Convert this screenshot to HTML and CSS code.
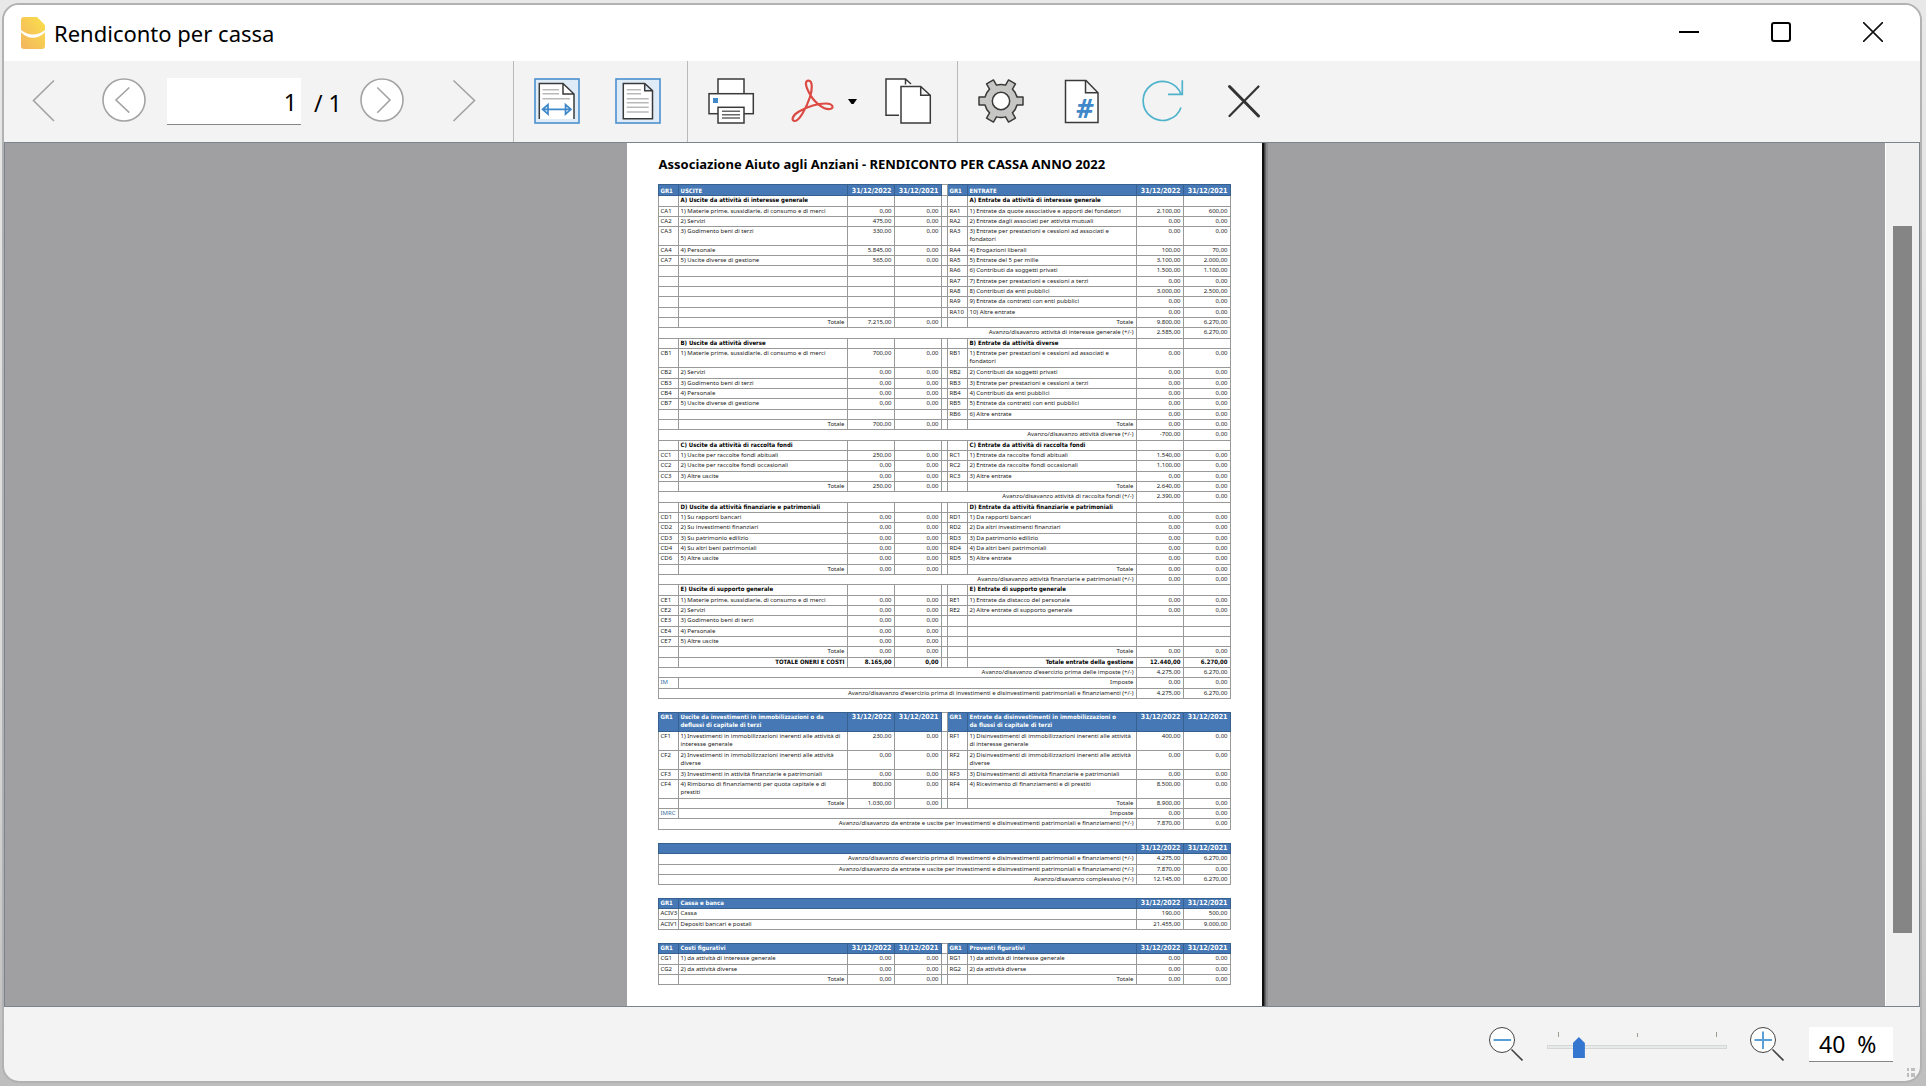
FILE: index.html
```html
<!DOCTYPE html>
<html lang="it">
<head>
<meta charset="utf-8">
<title>Rendiconto per cassa</title>
<link rel="stylesheet" href="styles.css">
</head>
<body>
<div class="window">
  <header class="titlebar">
    <svg class="app-icon" width="24" height="32" viewBox="0 0 24 32" aria-hidden="true">
      <defs><linearGradient id="gold" x1="1" y1="0" x2="0" y2="1"><stop offset="0" stop-color="#fae04b"/><stop offset="1" stop-color="#f3b45f"/></linearGradient></defs>
      <path d="M3 0H16L24 8V13Q12 22 0 13V3Q0 0 3 0ZM0 15.500Q12 26 24 15.500V29Q24 32 21 32H3Q0 32 0 29Z" fill="url(#gold)"/>
    </svg>
    <h1 class="title">Rendiconto per cassa</h1>
    <button class="win-btn" aria-label="Riduci a icona"><svg width="20" height="20"><path d="M0 10H20" stroke="#000" stroke-width="2"/></svg></button>
    <button class="win-btn" aria-label="Ingrandisci"><svg width="20" height="20"><rect x="1" y="1" width="18" height="18" rx="2" fill="none" stroke="#000" stroke-width="2"/></svg></button>
    <button class="win-btn" aria-label="Chiudi finestra"><svg width="20" height="20"><path d="M0 0L20 20M20 0L0 20" stroke="#111" stroke-width="1.600"/></svg></button>
  </header>

  <div class="toolbar">
    <div class="group nav">
      <button class="tool" aria-label="Prima pagina"><svg viewBox="0 0 47 47"><path d="M33 2.500L12.500 22.500L33 43" class="grey"/></svg></button>
      <button class="tool" aria-label="Pagina precedente"><svg viewBox="0 0 47 47"><circle cx="22" cy="22" r="21" class="grey white"/><path d="M27.300 9.500L14 22L27.300 34.700" class="grey"/></svg></button>
      <input class="page-no" type="text" value="1" aria-label="Pagina">
      <span class="page-count">/ 1</span>
      <button class="tool" aria-label="Pagina successiva"><svg viewBox="0 0 47 47"><circle cx="23" cy="22" r="21" class="grey white"/><path d="M18.300 9.500L31 22L18.300 34.700" class="grey"/></svg></button>
      <button class="tool" aria-label="Ultima pagina"><svg viewBox="0 0 47 47"><path d="M13.500 2.500L34.500 22.500L13.500 43" class="grey"/></svg></button>
    </div>
    <div class="group">
      <button class="tool" aria-label="Adatta alla larghezza"><svg viewBox="0 0 47 47">
        <rect x="1" y="1" width="44" height="44" class="frame"/>
        <path d="M5.300 41V5.500H29L40 16V41Z" fill="#fff"/><path d="M5.300 41V5.500H29L40 16V41M29 5.500V16H40" class="ink"/>
        <path d="M8.500 11.700H25M8.500 15.700H25M8.500 20.700H36" class="lines"/>
        <path d="M8.500 31.300H37M8.500 31.300L14 26.500V36.200ZM37 31.300L31.500 26.500V36.200Z" class="blue"/></svg></button>
      <button class="tool" aria-label="Pagina intera"><svg viewBox="0 0 47 47">
        <rect x="1" y="1" width="44" height="44" class="frame"/>
        <path d="M8.300 5.500H29.700L37.500 12.700V40.700H8.300ZM29.700 5.500V12.700H37.500" class="ink white"/>
        <path d="M11.700 11.700H26M11.700 15.700H26M11.700 20.700H33.700M11.700 24.700H33.700M11.700 29.300H33.700M11.700 34H33.700" class="lines"/></svg></button>
    </div>
    <div class="group">
      <button class="tool" aria-label="Stampa"><svg viewBox="0 0 47 47">
        <rect x="10" y="1" width="26" height="15" class="ink white"/><rect x="1" y="15.700" width="44.300" height="20" class="ink white"/>
        <rect x="5" y="20" width="5" height="5" fill="#3f88c9"/><rect x="10" y="29.300" width="26" height="15.700" class="ink white"/>
        <path d="M14 33.300H32M14 36.700H32M14 40H32" stroke="#666" stroke-width="1.400"/></svg></button>
      <button class="tool" aria-label="Esporta PDF"><svg viewBox="0 0 47 47"><path d="M19.500 2.700C24 2.700 23.200 12 21 19C17 31 10 43 6 43C1.500 43 3.500 37 10 33.500C18 29 29 25.500 37 25.500C44 25.500 45.500 30.500 41 31C34 32 24 23 20 14.500C16 7 16 2.700 19.500 2.700Z" fill="none" stroke="#dc4a43" stroke-width="2.200"/></svg></button>
      <button class="drop" aria-label="Opzioni PDF"><svg width="9" height="5"><path d="M0 0H9L5.500 5H3.500Z"/></svg></button>
      <button class="tool" aria-label="Copia"><svg viewBox="0 0 47 47">
        <path d="M1 37.300V1H20L26 6V8H16V37.300Z" fill="#fff"/><path d="M14 37.300H1V1H20.500L26 6M20.500 1V6.500" class="ink"/>
        <path d="M16 8.500H35.700L45.300 17.300V45H16ZM35.700 8.500V17.300H45.300" class="ink white"/></svg></button>
    </div>
    <div class="group">
      <button class="tool" aria-label="Impostazioni"><svg viewBox="0 0 47 47"><g transform="translate(23 23)">
        <path d="M16 -4L22 -4V4L16 4A16.500 16.500 0 0 1 11.460 11.860L14.460 17.050L7.540 21.050L4.540 15.860A16.500 16.500 0 0 1 -4.540 15.860L-7.540 21.050L-14.460 17.050L-11.460 11.860A16.500 16.500 0 0 1 -16 4L-22 4V-4L-16 -4A16.500 16.500 0 0 1 -11.460 -11.860L-14.460 -17.050L-7.540 -21.050L-4.540 -15.860A16.500 16.500 0 0 1 4.540 -15.860L7.540 -21.050L14.460 -17.050L11.460 -11.860A16.500 16.500 0 0 1 16 -4Z" class="ink gear"/>
        <circle r="8.700" class="ink white"/></g></svg></button>
      <button class="tool" aria-label="Numero di pagina"><svg viewBox="0 0 47 47"><path d="M6.500 2.500H27L39 14.700V44.500H6.500ZM26.500 2.500V14.700H39" class="ink white"/><text x="17" y="40" class="hash">#</text></svg></button>
      <button class="tool" aria-label="Aggiorna"><svg viewBox="0 0 47 47"><path d="M41 29.500A19.500 19.500 0 1 1 41 16.300M42.300 2.300V16.300H28" fill="none" stroke="#4fb3cb" stroke-width="1.700"/></svg></button>
      <button class="tool" aria-label="Chiudi"><svg viewBox="0 0 47 47"><path d="M8.500 8.500L37.500 38" stroke="#333" stroke-width="3" stroke-linecap="round"/><path d="M37.500 8.500L8.500 38" stroke="#333" stroke-width="2.200" stroke-linecap="round"/></svg></button>
    </div>
  </div>

  <main class="viewport">
    <div class="canvas">
      <article class="paper">
        <h2 class="doc-title">Associazione Aiuto agli Anziani - RENDICONTO PER CASSA ANNO 2022</h2>

        <table>
          <colgroup><col class="c-code"><col class="c-out"><col class="c-num"><col class="c-num"><col class="c-gap"><col class="c-code"><col class="c-in"><col class="c-num"><col class="c-num"></colgroup>
          <thead><tr class="main-head"><th>GR1<th>USCITE<th class="date">31/12/2022<th class="date">31/12/2021<td><th>GR1<th>ENTRATE<th class="date">31/12/2022<th class="date">31/12/2021</thead>
          <tbody>
          <tr class="sec"><td><td>A) Uscite da attività di interesse generale<td><td><td><td><td>A) Entrate da attività di interesse generale<td><td>
          <tr><td>CA1<td>1) Materie prime, sussidiarie, di consumo e di merci<td>0,00<td>0,00<td><td>RA1<td>1) Entrate da quote associative e apporti dei fondatori<td>2.100,00<td>600,00
          <tr><td>CA2<td>2) Servizi<td>475,00<td>0,00<td><td>RA2<td>2) Entrate dagli associati per attività mutuali<td>0,00<td>0,00
          <tr class="tall"><td>CA3<td>3) Godimento beni di terzi<td>330,00<td>0,00<td><td>RA3<td>3) Entrate per prestazioni e cessioni ad associati e<br>fondatori<td>0,00<td>0,00
          <tr><td>CA4<td>4) Personale<td>5.845,00<td>0,00<td><td>RA4<td>4) Erogazioni liberali<td>100,00<td>70,00
          <tr><td>CA7<td>5) Uscite diverse di gestione<td>565,00<td>0,00<td><td>RA5<td>5) Entrate del 5 per mille<td>3.100,00<td>2.000,00
          <tr><td><td><td><td><td><td>RA6<td>6) Contributi da soggetti privati<td>1.500,00<td>1.100,00
          <tr><td><td><td><td><td><td>RA7<td>7) Entrate per prestazioni e cessioni a terzi<td>0,00<td>0,00
          <tr><td><td><td><td><td><td>RA8<td>8) Contributi da enti pubblici<td>3.000,00<td>2.500,00
          <tr><td><td><td><td><td><td>RA9<td>9) Entrate da contratti con enti pubblici<td>0,00<td>0,00
          <tr><td><td><td><td><td><td>RA10<td>10) Altre entrate<td>0,00<td>0,00
          <tr class="tot"><td><td>Totale<td>7.215,00<td>0,00<td><td><td>Totale<td>9.800,00<td>6.270,00
          <tr class="tot"><td colspan="7">Avanzo/disavanzo attività di interesse generale (+/-)<td>2.585,00<td>6.270,00
          <tr class="sec"><td><td>B) Uscite da attività diverse<td><td><td><td><td>B) Entrate da attività diverse<td><td>
          <tr class="tall"><td>CB1<td>1) Materie prime, sussidiarie, di consumo e di merci<td>700,00<td>0,00<td><td>RB1<td>1) Entrate per prestazioni e cessioni ad associati e<br>fondatori<td>0,00<td>0,00
          <tr><td>CB2<td>2) Servizi<td>0,00<td>0,00<td><td>RB2<td>2) Contributi da soggetti privati<td>0,00<td>0,00
          <tr><td>CB3<td>3) Godimento beni di terzi<td>0,00<td>0,00<td><td>RB3<td>3) Entrate per prestazioni e cessioni a terzi<td>0,00<td>0,00
          <tr><td>CB4<td>4) Personale<td>0,00<td>0,00<td><td>RB4<td>4) Contributi da enti pubblici<td>0,00<td>0,00
          <tr><td>CB7<td>5) Uscite diverse di gestione<td>0,00<td>0,00<td><td>RB5<td>5) Entrate da contratti con enti pubblici<td>0,00<td>0,00
          <tr><td><td><td><td><td><td>RB6<td>6) Altre entrate<td>0,00<td>0,00
          <tr class="tot"><td><td>Totale<td>700,00<td>0,00<td><td><td>Totale<td>0,00<td>0,00
          <tr class="tot"><td colspan="7">Avanzo/disavanzo attività diverse (+/-)<td>-700,00<td>0,00
          <tr class="sec"><td><td>C) Uscite da attività di raccolta fondi<td><td><td><td><td>C) Entrate da attività di raccolta fondi<td><td>
          <tr><td>CC1<td>1) Uscite per raccolte fondi abituali<td>250,00<td>0,00<td><td>RC1<td>1) Entrate da raccolte fondi abituali<td>1.540,00<td>0,00
          <tr><td>CC2<td>2) Uscite per raccolte fondi occasionali<td>0,00<td>0,00<td><td>RC2<td>2) Entrate da raccolte fondi occasionali<td>1.100,00<td>0,00
          <tr><td>CC3<td>3) Altre uscite<td>0,00<td>0,00<td><td>RC3<td>3) Altre entrate<td>0,00<td>0,00
          <tr class="tot"><td><td>Totale<td>250,00<td>0,00<td><td><td>Totale<td>2.640,00<td>0,00
          <tr class="tot"><td colspan="7">Avanzo/disavanzo attività di raccolta fondi (+/-)<td>2.390,00<td>0,00
          <tr class="sec"><td><td>D) Uscite da attività finanziarie e patrimoniali<td><td><td><td><td>D) Entrate da attività finanziarie e patrimoniali<td><td>
          <tr><td>CD1<td>1) Su rapporti bancari<td>0,00<td>0,00<td><td>RD1<td>1) Da rapporti bancari<td>0,00<td>0,00
          <tr><td>CD2<td>2) Su investimenti finanziari<td>0,00<td>0,00<td><td>RD2<td>2) Da altri investimenti finanziari<td>0,00<td>0,00
          <tr><td>CD3<td>3) Su patrimonio edilizio<td>0,00<td>0,00<td><td>RD3<td>3) Da patrimonio edilizio<td>0,00<td>0,00
          <tr><td>CD4<td>4) Su altri beni patrimoniali<td>0,00<td>0,00<td><td>RD4<td>4) Da altri beni patrimoniali<td>0,00<td>0,00
          <tr><td>CD6<td>5) Altre uscite<td>0,00<td>0,00<td><td>RD5<td>5) Altre entrate<td>0,00<td>0,00
          <tr class="tot"><td><td>Totale<td>0,00<td>0,00<td><td><td>Totale<td>0,00<td>0,00
          <tr class="tot"><td colspan="7">Avanzo/disavanzo attività finanziarie e patrimoniali (+/-)<td>0,00<td>0,00
          <tr class="sec"><td><td>E) Uscite di supporto generale<td><td><td><td><td>E) Entrate di supporto generale<td><td>
          <tr><td>CE1<td>1) Materie prime, sussidiarie, di consumo e di merci<td>0,00<td>0,00<td><td>RE1<td>1) Entrate da distacco del personale<td>0,00<td>0,00
          <tr><td>CE2<td>2) Servizi<td>0,00<td>0,00<td><td>RE2<td>2) Altre entrate di supporto generale<td>0,00<td>0,00
          <tr><td>CE3<td>3) Godimento beni di terzi<td>0,00<td>0,00<td><td><td><td><td>
          <tr><td>CE4<td>4) Personale<td>0,00<td>0,00<td><td><td><td><td>
          <tr><td>CE7<td>5) Altre uscite<td>0,00<td>0,00<td><td><td><td><td>
          <tr class="tot"><td><td>Totale<td>0,00<td>0,00<td><td><td>Totale<td>0,00<td>0,00
          <tr class="tot sec"><td><td>TOTALE ONERI E COSTI<td>8.165,00<td>0,00<td><td><td>Totale entrate della gestione<td>12.440,00<td>6.270,00
          <tr class="tot"><td colspan="7">Avanzo/disavanzo d'esercizio prima delle imposte (+/-)<td>4.275,00<td>6.270,00
          <tr class="tot"><td class="tax">IM<td colspan="6">Imposte<td>0,00<td>0,00
          <tr class="tot"><td colspan="7">Avanzo/disavanzo d'esercizio prima di investimenti e disinvestimenti patrimoniali e finanziamenti (+/-)<td>4.275,00<td>6.270,00
          </tbody>
        </table>

        <table>
          <colgroup><col class="c-code"><col class="c-out"><col class="c-num"><col class="c-num"><col class="c-gap"><col class="c-code"><col class="c-in"><col class="c-num"><col class="c-num"></colgroup>
          <thead><tr class="tall"><th>GR1<th>Uscite da investimenti in immobilizzazioni o da<br>deflussi di capitale di terzi<th class="date">31/12/2022<th class="date">31/12/2021<td><th>GR1<th>Entrate da disinvestimenti in immobilizzazioni o<br>da flussi di capitale di terzi<th class="date">31/12/2022<th class="date">31/12/2021</thead>
          <tbody>
          <tr class="tall"><td>CF1<td>1) Investimenti in immobilizzazioni inerenti alle attività di<br>interesse generale<td>230,00<td>0,00<td><td>RF1<td>1) Disinvestimenti di immobilizzazioni inerenti alle attività<br>di interesse generale<td>400,00<td>0,00
          <tr class="tall"><td>CF2<td>2) Investimenti in immobilizzazioni inerenti alle attività<br>diverse<td>0,00<td>0,00<td><td>RF2<td>2) Disinvestimenti di immobilizzazioni inerenti alle attività<br>diverse<td>0,00<td>0,00
          <tr><td>CF3<td>3) Investimenti in attività finanziarie e patrimoniali<td>0,00<td>0,00<td><td>RF3<td>3) Disinvestimenti di attività finanziarie e patrimoniali<td>0,00<td>0,00
          <tr class="tall"><td>CF4<td>4) Rimborso di finanziamenti per quota capitale e di<br>prestiti<td>800,00<td>0,00<td><td>RF4<td>4) Ricevimento di finanziamenti e di prestiti<td>8.500,00<td>0,00
          <tr class="tot"><td><td>Totale<td>1.030,00<td>0,00<td><td><td>Totale<td>8.900,00<td>0,00
          <tr class="tot"><td class="tax">IMRC<td colspan="6">Imposte<td>0,00<td>0,00
          <tr class="tot"><td colspan="7">Avanzo/disavanzo da entrate e uscite per investimenti e disinvestimenti patrimoniali e finanziamenti (+/-)<td>7.870,00<td>0,00
          </tbody>
        </table>

        <table>
          <colgroup><col class="c-code"><col class="c-out"><col class="c-num"><col class="c-num"><col class="c-gap"><col class="c-code"><col class="c-in"><col class="c-num"><col class="c-num"></colgroup>
          <thead><tr><th colspan="7"><th class="date">31/12/2022<th class="date">31/12/2021</thead>
          <tbody>
          <tr class="tot"><td colspan="7">Avanzo/disavanzo d'esercizio prima di investimenti e disinvestimenti patrimoniali e finanziamenti (+/-)<td>4.275,00<td>6.270,00
          <tr class="tot"><td colspan="7">Avanzo/disavanzo da entrate e uscite per investimenti e disinvestimenti patrimoniali e finanziamenti (+/-)<td>7.870,00<td>0,00
          <tr class="tot"><td colspan="7">Avanzo/disavanzo complessivo (+/-)<td>12.145,00<td>6.270,00
          </tbody>
        </table>

        <table>
          <colgroup><col class="c-code"><col class="c-out"><col class="c-num"><col class="c-num"><col class="c-gap"><col class="c-code"><col class="c-in"><col class="c-num"><col class="c-num"></colgroup>
          <thead><tr><th>GR1<th colspan="6">Cassa e banca<th class="date">31/12/2022<th class="date">31/12/2021</thead>
          <tbody>
          <tr><td>ACIV3<td colspan="6">Cassa<td>190,00<td>500,00
          <tr><td>ACIV1<td colspan="6">Depositi bancari e postali<td>21.455,00<td>9.000,00
          </tbody>
        </table>

        <table>
          <colgroup><col class="c-code"><col class="c-out"><col class="c-num"><col class="c-num"><col class="c-gap"><col class="c-code"><col class="c-in"><col class="c-num"><col class="c-num"></colgroup>
          <thead><tr><th>GR1<th>Costi figurativi<th class="date">31/12/2022<th class="date">31/12/2021<td><th>GR1<th>Proventi figurativi<th class="date">31/12/2022<th class="date">31/12/2021</thead>
          <tbody>
          <tr><td>CG1<td>1) da attività di interesse generale<td>0,00<td>0,00<td><td>RG1<td>1) da attività di interesse generale<td>0,00<td>0,00
          <tr><td>CG2<td>2) da attività diverse<td>0,00<td>0,00<td><td>RG2<td>2) da attività diverse<td>0,00<td>0,00
          <tr class="tot"><td><td>Totale<td>0,00<td>0,00<td><td><td>Totale<td>0,00<td>0,00
          </tbody>
        </table>
      </article>
    </div>
    <div class="scrollbar"><div class="thumb"></div></div>
  </main>

  <footer class="statusbar">
    <button class="zoom-btn" aria-label="Riduci zoom"><svg width="34" height="34"><path d="M22.500 22.500L33.500 33.500" stroke="#444" stroke-width="1.600"/><circle cx="13" cy="13" r="12.500" fill="#fff" stroke="#444"/><path d="M4.500 13H22" stroke="#5a9fd6" stroke-width="2"/></svg></button>
    <input class="slider" type="range" min="0" max="100" value="15" aria-label="Zoom">
    <button class="zoom-btn" aria-label="Aumenta zoom"><svg width="34" height="34"><path d="M22.500 22.500L33.500 33.500" stroke="#444" stroke-width="1.600"/><circle cx="13" cy="13" r="12.500" fill="#fff" stroke="#444"/><path d="M4.500 13H22M13 4.500V22" stroke="#5a9fd6" stroke-width="2"/></svg></button>
    <input class="percent" type="text" value="40  %" aria-label="Percentuale di zoom">
    <span class="grip"></span>
  </footer>
</div>
</body>
</html>
```

FILE: styles.css
```css
* { box-sizing: border-box; }

body {
  margin: 0;
  height: 100vh;
  padding: 3px 4px 3px 2px;
  background: linear-gradient(#e8e8e8, #dcdcdc 60%, #bebebe);
  font-family: "Noto Sans", "Open Sans", sans-serif;
  color: #000;
}

button { border: 0; padding: 0; background: none; display: flex; align-items: center; justify-content: center; }
input { border: 0; margin: 0; font: inherit; color: inherit; }

.window {
  height: 100%;
  display: flex;
  flex-direction: column;
  border: 2px solid #b2b2b2;
  border-radius: 17px;
  background: #f3f3f3;
  overflow: hidden;
}

/* title bar */
.titlebar { display: flex; align-items: center; height: 56px; flex: none; padding: 0 1px 0 17px; background: #fff; }
.title { flex: 1; margin: 0 0 0 9px; font-size: 22px; line-height: 30px; font-weight: 400; }
.win-btn { width: 92px; height: 54px; align-self: flex-start; }

/* toolbar */
.toolbar { display: flex; height: 81px; flex: none; font-size: 23px; }
.group { display: flex; align-items: center; padding: 0 8px 0 3px; border-left: 1px solid #b9b9b9; }
.group.nav { padding: 0 9px 0 0; border: 0; }
.tool { width: 81px; height: 81px; }
.tool svg { width: 47px; height: 47px; }
.drop { width: 15px; height: 47px; margin: 0 8px 0 -8px; }
.page-no {
  width: 134px; height: 47px; margin-left: 1px; padding: 2px 4px 0 0;
  text-align: right; background: #fff; border-bottom: 1px solid #868686;
}
.page-count { width: 41px; padding: 3px 0 0 13px; white-space: nowrap; }

.ink { fill: none; stroke: #3a3a3a; stroke-width: 1.5; }
.grey { fill: none; stroke: #a3a3a3; stroke-width: 1.6; }
.white { fill: #fff; }
.gear { fill: #c6c6c4; stroke-linejoin: round; }
.frame { fill: #dfecf7; stroke: #4a90cf; stroke-width: 1.6; }
.lines { stroke: #b9b9b9; stroke-width: 1.6; }
.blue { fill: #dfecf7; stroke: #3f88c9; stroke-width: 1.7; }
.hash { font: italic bold 27px "Noto Sans", sans-serif; fill: #3f88c9; }

/* preview area */
.viewport { flex: 1; min-height: 0; display: flex; border: 1px solid #7b838d; }
.canvas { flex: 1; display: flex; justify-content: center; padding-right: 2px; overflow: hidden; background: #a0a0a3; }
.paper {
  width: 635px; padding: 12px 31px 0; background: #fff;
  box-shadow: 2px 0 0 #111, 3px 0 0 #444, 4px 0 0 #666, 6px 0 0 #8c8c8e;
}
.scrollbar { width: 34px; padding: 83px 7px 73px; border-left: 1px solid #fff; background: #f0f0f0; }
.thumb { height: 100%; background: #858585; }

.doc-title { margin: 0 0 11px; padding-left: 1px; font-size: 13px; line-height: 18px; font-weight: 700; }

table {
  width: 573px; margin-bottom: 13px; table-layout: fixed; border-collapse: collapse;
  font-size: 6px; line-height: 8px; color: #222;
}
.c-code { width: 20px; }
.c-out { width: 169px; }
.c-num { width: 47px; }
.c-gap { width: 6px; }
tr { height: 10px; }
tr.main-head, tbody tr:nth-child(3n+1) { height: 11px; }
tr.tall, tbody tr.tall { height: 19px; }
th, td { padding: 0 2px; border: 1px solid #999; text-align: right; vertical-align: top; white-space: nowrap; }
td:nth-child(1), td:nth-child(2), td:nth-child(6), td:nth-child(7),
th:nth-child(1), th:nth-child(2), th:nth-child(6), th:nth-child(7) { text-align: left; }
.tot td { text-align: right; }
.tot .tax { text-align: left; color: #3a6f9f; }
th { background: #4578b4; color: #fff; border-color: #36608f; font-family: "DejaVu Sans Condensed", "Noto Sans", sans-serif; font-weight: 700; }
th.date { font-size: 7px; text-align: right; }
.main-head th { vertical-align: bottom; }
.sec td { color: #000; font-family: "DejaVu Sans Condensed", "Noto Sans", sans-serif; font-weight: 700; }

/* status bar */
.statusbar { display: flex; align-items: center; justify-content: flex-end; height: 74px; flex: none; padding-right: 5px; font-size: 23px; }
.zoom-btn { width: 34px; height: 34px; }
.slider {
  appearance: none; width: 180px; height: 30px; margin: 6px 23px 0 24px;
  background:
    linear-gradient(#9d9d90, #9d9d90) 11px 0 / 1px 5px no-repeat,
    linear-gradient(#9d9d90, #9d9d90) 90px 1px / 1px 4px no-repeat,
    linear-gradient(#9d9d90, #9d9d90) 169px 0 / 1px 5px no-repeat;
}
.slider::-webkit-slider-runnable-track { height: 4px; background: #e7eaea; border: 1px solid #d6d6d6; }
.slider::-webkit-slider-thumb {
  appearance: none; width: 12px; height: 21px; margin-top: -9px; background: #3576d0;
  clip-path: polygon(50% 0, 100% 28%, 100% 100%, 0 100%, 0 28%);
}
.percent { width: 84px; height: 35px; margin: 0 14px 0 25px; padding: 0 0 0 10px; background: #fff; border-bottom: 1px solid #868686; white-space: pre; }
.grip {
  width: 8px; height: 9px; align-self: flex-end; margin-bottom: 4px;
  background:
    linear-gradient(#bdbdbd, #bdbdbd) 0 0 / 2px 3px, linear-gradient(#bdbdbd, #bdbdbd) 100% 0 / 4px 3px,
    linear-gradient(#bdbdbd, #bdbdbd) 0 100% / 2px 4px, linear-gradient(#bdbdbd, #bdbdbd) 100% 100% / 4px 4px;
  background-repeat: no-repeat;
}
```
